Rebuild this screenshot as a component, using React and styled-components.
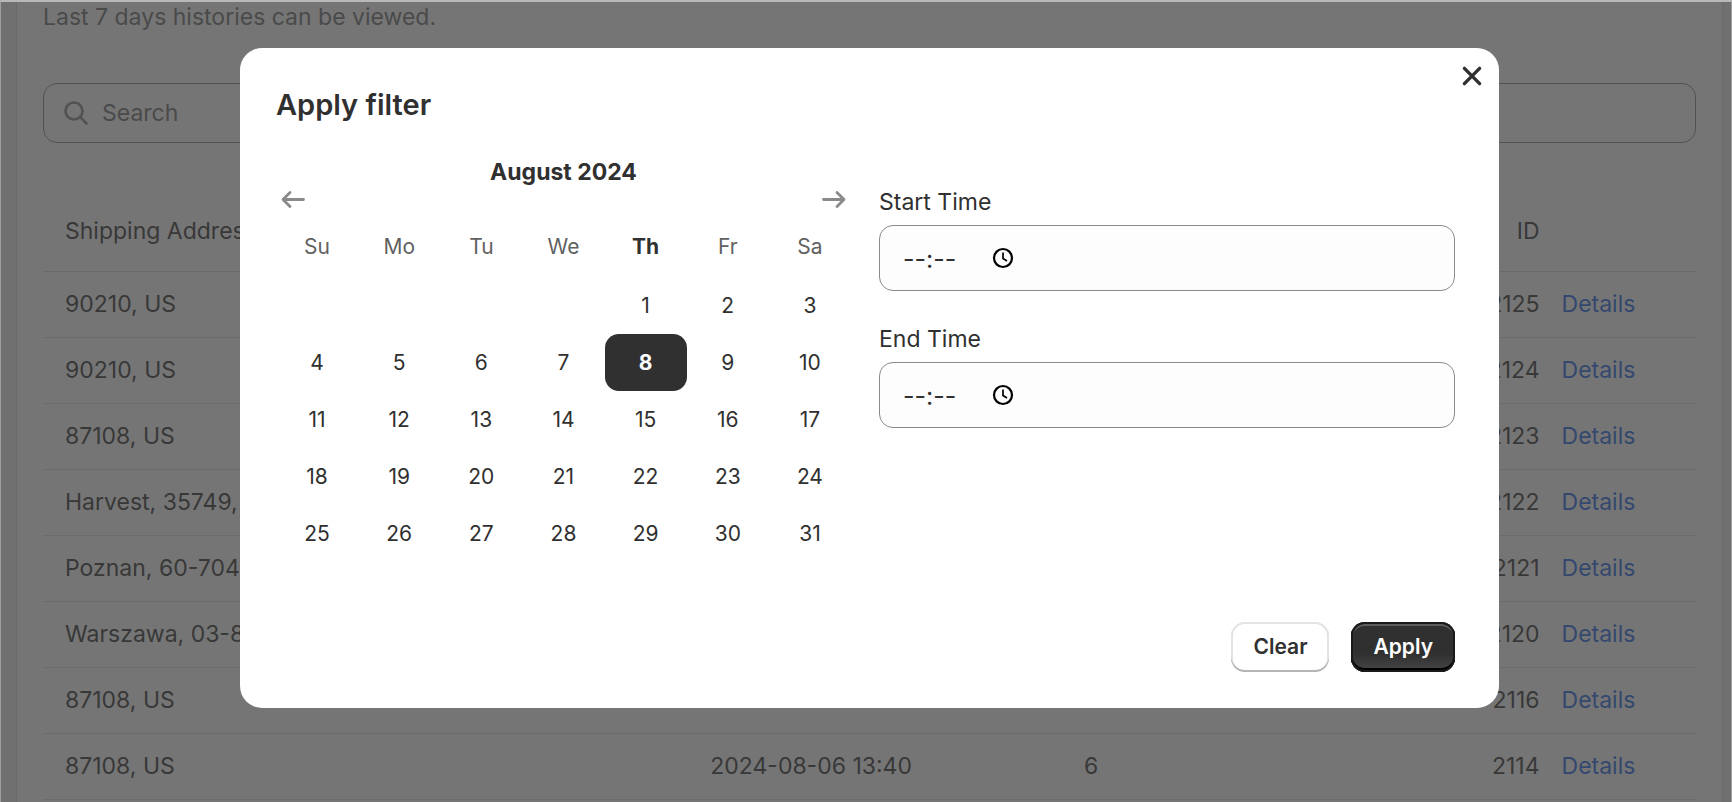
import React, { useState } from 'react';
import styled, { createGlobalStyle } from 'styled-components';

const GlobalStyle = createGlobalStyle`
    * {
        box-sizing: border-box;
    }

    html, body, #root {
        height: 100%;
    }

    body {
        margin: 0;
        overflow: hidden;
        background: #ececec;
        color: #303030;
        font-family: Inter, "Liberation Sans", sans-serif;
        font-size: 23px;
        line-height: 32px;
    }

    button, input {
        font: inherit;
        color: inherit;
    }
`;

const Page = styled.div`
    height: 100%;
    overflow: hidden;
    padding: 0 8px 0 15px;
    border: 1px solid #a0a0a0;
    border-top: 2px solid #b8b8b8;
    border-bottom: 0;
`;

const Card = styled.main`
    min-height: 100%;
    padding: 0 26px;
    background: #fff;
    border: 1px solid #dadada;
    border-width: 0 1px;
`;

const Note = styled.p`
    margin: 0;
    color: #6e6e6e;
    line-height: 30px;
`;

const SearchBox = styled.label`
    display: flex;
    align-items: center;
    gap: 14px;
    height: 60px;
    margin-top: 51px;
    padding: 0 20px;
    border: 1px solid #8a8a8a;
    border-radius: 14px;
    color: #6e6e6e;

    input {
        flex: 1;
        padding: 0;
        border: 0;
        outline: 0;
        background: transparent;
    }

    input::placeholder {
        color: #6e6e6e;
        opacity: 1;
    }
`;

const Table = styled.table`
    width: 100%;
    margin-top: 48px;
    border-collapse: collapse;
    table-layout: fixed;
`;

const Th = styled.th`
    height: 80px;
    padding: 0 11px;
    border-bottom: 1px solid #d8d8d8;
    font-weight: 400;
    text-align: ${props => props.$align || 'left'};

    &:first-child {
        padding-left: 22px;
    }
`;

const Td = styled.td`
    height: 66px;
    padding: 0 11px;
    border-bottom: 1px solid #dfdfdf;
    text-align: ${props => props.$align || 'left'};
    white-space: nowrap;

    &:first-child {
        padding-left: 22px;
    }
`;

const DetailsLink = styled.a`
    color: #2468e8;
    text-decoration: none;
`;

// covers the page and holds the dialog
const Backdrop = styled.div`
    position: fixed;
    inset: 2px 1px 0;
    display: flex;
    align-items: flex-start;
    padding: 46px 232px 0 239px;
    background: rgba(59, 59, 59, 0.705);
`;

const Dialog = styled.section`
    position: relative;
    flex: 1;
    padding: 36px 44px 36px 36px;
    border-radius: 22px;
    background: #fff;
`;

const CloseButton = styled.button`
    position: absolute;
    top: 13px;
    right: 12px;
    display: flex;
    padding: 4px;
    border: 0;
    background: transparent;
    cursor: pointer;
`;

const Title = styled.h2`
    margin: 0;
    font-size: 29px;
    font-weight: 600;
    line-height: 42px;
`;

const Columns = styled.div`
    display: grid;
    grid-template-columns: 575px 1fr;
    gap: 28px;
    margin-top: 30px;
`;

const Month = styled.h3`
    margin: 0;
    font-size: 23px;
    font-weight: 700;
    line-height: 32px;
    text-align: center;
`;

const MonthNav = styled.div`
    display: flex;
    justify-content: space-between;
    padding: 0 4px;
`;

const NavButton = styled.button`
    display: flex;
    padding: 0;
    border: 0;
    background: transparent;
    color: #8a8a8a;
    cursor: pointer;
`;

const Calendar = styled.table`
    width: 100%;
    margin-top: 6px;
    border-collapse: collapse;
    table-layout: fixed;
    font-size: 21px;

    th, td {
        padding: 0;
    }
`;

const Weekday = styled.th`
    height: 61px;
    color: ${props => props.$today ? '#303030' : '#616161'};
    font-weight: ${props => props.$today ? 700 : 400};
`;

const Day = styled.button`
    display: block;
    width: 100%;
    height: 57px;
    padding: 0;
    border: 0;
    border-radius: 14px;
    background: ${props => props.$selected ? '#303030' : 'transparent'};
    color: ${props => props.$selected ? '#fff' : '#303030'};
    font-weight: ${props => props.$selected ? 700 : 400};
    cursor: pointer;
`;

const Times = styled.div`
    display: flex;
    flex-direction: column;
    gap: 32px;
    padding-top: 30px;
`;

const Field = styled.div`
    display: flex;
    flex-direction: column;
    gap: 7px;
`;

const TimeBox = styled.div`
    display: flex;
    align-items: center;
    gap: 32px;
    height: 66px;
    padding: 0 23px;
    border: 1px solid #8a8a8a;
    border-radius: 14px;
    background: #fdfdfd;

    input {
        width: 57px;
        padding: 2px 0 0;
        border: 0;
        outline: 0;
        background: transparent;
        font-size: 25px;
    }

    input::placeholder {
        color: #303030;
        opacity: 1;
    }
`;

const Footer = styled.div`
    display: flex;
    justify-content: flex-end;
    gap: 22px;
    margin-top: 60px;
`;

const Button = styled.button`
    height: 50px;
    padding: 0 22px;
    border: 0;
    border-radius: 14px;
    background: ${props => props.$primary ? 'linear-gradient(#303030 63%, #474747)' : '#fff'};
    color: ${props => props.$primary ? '#fff' : '#303030'};
    box-shadow: ${props => props.$primary
        ? 'inset 0 0 0 2px #1a1a1a, inset 0 -3px 0 1px #000, inset 0 3px 0 1px #5c5c5c'
        : 'inset 0 -2px 0 #b5b5b5, inset 0 0 0 2px #e3e3e3'};
    font-size: 21px;
    font-weight: 600;
    cursor: pointer;
`;

const orders = [
    { address: '90210, US', id: '2125' },
    { address: '90210, US', id: '2124' },
    { address: '87108, US', id: '2123' },
    { address: 'Harvest, 35749,', id: '2122' },
    { address: 'Poznan, 60-704', id: '2121' },
    { address: 'Warszawa, 03-8', id: '2120' },
    { address: '87108, US', id: '2116', date: '2024-08-06 13:40' },
    { address: '87108, US', id: '2114', date: '2024-08-06 13:40', items: 6 },
];

const weekdays = ['Su', 'Mo', 'Tu', 'We', 'Th', 'Fr', 'Sa'];

// August 2024 starts on a Thursday
const weeks = [0, 1, 2, 3, 4].map(week => weekdays.map((_, i) => week * 7 + i - 3));

function SearchIcon() {
    return (
        <svg width="24" height="24" viewBox="0 0 24 24" fill="none" stroke="#8a8a8a" strokeWidth="2.6" strokeLinecap="round">
            <circle cx="10" cy="10" r="8.5" />
            <path d="M16.2 16.2 22.5 22.5" />
        </svg>
    );
}

function CloseIcon() {
    return (
        <svg width="22" height="22" viewBox="0 0 22 22" fill="none" stroke="#303030" strokeWidth="3.4" strokeLinecap="round">
            <path d="M3.4 3.4 18.6 18.6M18.6 3.4 3.4 18.6" />
        </svg>
    );
}

function Arrow({ right }) {
    return (
        <svg width="26" height="22" viewBox="0 0 26 22" fill="none" stroke="currentColor" strokeWidth="2.8" strokeLinecap="round" strokeLinejoin="round">
            {right
                ? <path d="M2.5 11.5H23M16 4.5 23 11.5 16 18.5" />
                : <path d="M23.5 11.5H3M10 4.5 3 11.5 10 18.5" />}
        </svg>
    );
}

function ClockIcon() {
    return (
        <svg width="22" height="22" viewBox="0 0 22 22" fill="none" stroke="#000">
            <circle cx="11" cy="11" r="9" strokeWidth="2.2" />
            <path d="M11 5.5V11.5L15 14" strokeWidth="1.7" />
        </svg>
    );
}

function TimeField({ id, label }) {
    return (
        <Field>
            <label htmlFor={id}>{label}</label>
            <TimeBox>
                <input id={id} type="text" placeholder="--:--" />
                <ClockIcon />
            </TimeBox>
        </Field>
    );
}

function DatePicker() {
    let [selected, setSelected] = useState(8);

    return (
        <div>
            <Month>August 2024</Month>
            <MonthNav>
                <NavButton aria-label="Previous month"><Arrow /></NavButton>
                <NavButton aria-label="Next month"><Arrow right /></NavButton>
            </MonthNav>
            <Calendar>
                <thead>
                    <tr>
                        {weekdays.map(name => <Weekday key={name} $today={name === 'Th'}>{name}</Weekday>)}
                    </tr>
                </thead>
                <tbody>
                    {weeks.map((week, i) => (
                        <tr key={i}>
                            {week.map(day => (
                                <td key={day}>
                                    {day > 0 && (
                                        <Day $selected={day === selected} onClick={() => { setSelected(day) }}>{day}</Day>
                                    )}
                                </td>
                            ))}
                        </tr>
                    ))}
                </tbody>
            </Calendar>
        </div>
    );
}

const Col = styled.col`
    width: ${props => props.$width || 'auto'};
`;

function Orders() {
    return (
        <Table>
            <colgroup>
                <Col $width="39.7%" />
                <Col $width="14%" />
                <Col $width="10.8%" />
                <Col />
                <Col $width="8.8%" />
            </colgroup>
            <thead>
                <tr>
                    <Th>Shipping Address</Th>
                    <Th />
                    <Th />
                    <Th $align="right">ID</Th>
                    <Th />
                </tr>
            </thead>
            <tbody>
                {orders.map(order => (
                    <tr key={order.id}>
                        <Td>{order.address}</Td>
                        <Td>{order.date}</Td>
                        <Td $align="right">{order.items}</Td>
                        <Td $align="right">{order.id}</Td>
                        <Td><DetailsLink href="#details">Details</DetailsLink></Td>
                    </tr>
                ))}
            </tbody>
        </Table>
    );
}

export default function App() {
    return (
        <>
            <GlobalStyle />
            <Page>
                <Card>
                    <Note>Last 7 days histories can be viewed.</Note>
                    <SearchBox>
                        <SearchIcon />
                        <input type="text" placeholder="Search" />
                    </SearchBox>
                    <Orders />
                </Card>
            </Page>
            <Backdrop>
                <Dialog role="dialog" aria-labelledby="filter-title">
                    <CloseButton aria-label="Close"><CloseIcon /></CloseButton>
                    <Title id="filter-title">Apply filter</Title>
                    <Columns>
                        <DatePicker />
                        <Times>
                            <TimeField id="start-time" label="Start Time" />
                            <TimeField id="end-time" label="End Time" />
                        </Times>
                    </Columns>
                    <Footer>
                        <Button>Clear</Button>
                        <Button $primary>Apply</Button>
                    </Footer>
                </Dialog>
            </Backdrop>
        </>
    );
}
